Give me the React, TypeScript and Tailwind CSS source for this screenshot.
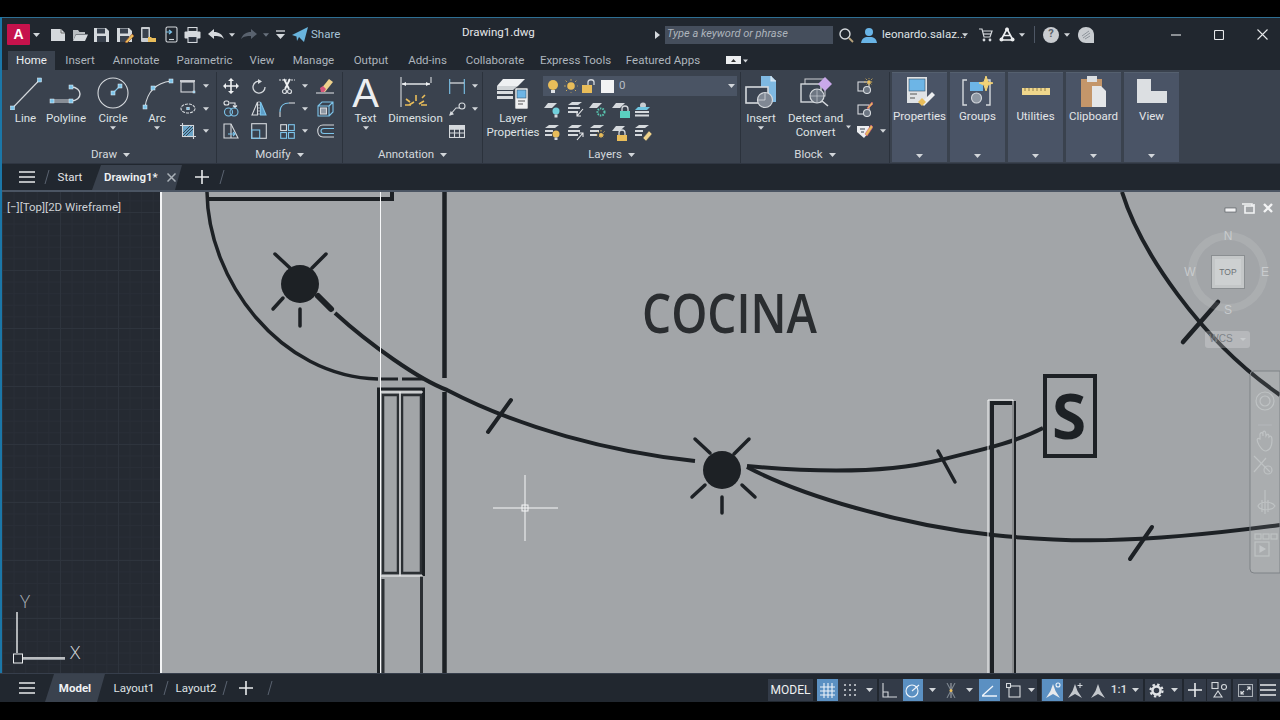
import React from "react";

type P = { className?: string };
const L = "#d5d9dd";
const B = "#7cc4ea";
const Y = "#e9bd5a";

const Caret = ({ className = "", c = "#d2d6da", w = 7 }: P & { c?: string; w?: number }) => (
  <svg width={w} height={4} viewBox="0 0 7 4" className={"shrink-0 " + className}>
    <path d="M0 0H7L3.5 4Z" fill={c} />
  </svg>
);
const Box = ({ x, y, s = 4, c = B }: { x: number; y: number; s?: number; c?: string }) => (
  <rect x={x - s / 2} y={y - s / 2} width={s} height={s} fill={c} stroke="#e8f4fb" strokeWidth={0.5} />
);
const Ic = ({ w = 18, h = 18, className = "", children }: P & { w?: number; h?: number; children: React.ReactNode }) => (
  <svg width={w} height={h} viewBox={`0 0 ${w} ${h}`} fill="none" stroke={L} strokeWidth={1.1} className={"shrink-0 " + className}>
    {children}
  </svg>
);
const Ham = ({ className = "" }: P) => (
  <Ic w={16} h={14} className={className}>
    <path d="M0 2H16M0 7H16M0 12H16" strokeWidth={1.6} stroke="#e8eaec" />
  </Ic>
);
const Plus = ({ className = "" }: P) => (
  <Ic w={14} h={14} className={className}>
    <path d="M7 0V14M0 7H14" strokeWidth={1.6} stroke="#e8eaec" />
  </Ic>
);
const Slash = ({ className = "" }: P) => (
  <Ic w={6} h={14} className={className}>
    <path d="M1 14L5 0" stroke="#5a6370" strokeWidth={1} />
  </Ic>
);

/* ---------- quick access ---------- */
const QNew = () => (
  <Ic w={16} h={14} className="ml-[10px]">
    <path d="M1 1H11L15 5V13H1Z" fill={L} stroke="none" />
    <path d="M11 1V5H15" stroke="#555" strokeWidth={0.8} />
  </Ic>
);
const QOpen = () => (
  <Ic w={16} h={14} className="ml-[6px]">
    <path d="M1 2H6L7.500 4H13V6H4L1 13Z" fill="#b9bdc1" stroke="none" />
    <path d="M4 6.500H16L13 13H1Z" fill={L} stroke="none" />
  </Ic>
);
const QSave = ({ pen, className = "" }: P & { pen?: boolean }) => (
  <Ic w={18} h={16} className={className}>
    <path d="M1 1H13L16 4V15H1Z" fill={L} stroke="none" />
    <rect x={4} y={1.500} width={8} height={5} fill="#39414d" stroke="none" />
    <rect x={4} y={9} width={9} height={6} fill="#39414d" stroke="none" />
    {pen && <path d="M9 15L16 7L18 9L11 16Z" fill={Y} stroke="#a5522c" strokeWidth={0.6} />}
  </Ic>
);
const QWeb = () => (
  <Ic w={16} h={17} className="ml-[6px]">
    <rect x={1} y={1} width={9} height={15} rx={1} fill="#c8ccd0" stroke="none" />
    <rect x={2.500} y={3} width={6} height={9} fill="#39414d" stroke="none" />
    <path d="M8 11H11L12 12H16V16H8Z" fill={Y} stroke="none" />
  </Ic>
);
const QPhone = () => (
  <Ic w={13} h={17} className="ml-[9px]">
    <rect x={1} y={1} width={11} height={15} rx={1.500} stroke={L} />
    <path d="M1 6H6M4 4L6.500 6L4 8" stroke={B} strokeWidth={1.2} />
    <path d="M4 13.500H9" stroke={L} />
  </Ic>
);
const QPrint = () => (
  <Ic w={17} h={16} className="ml-[6px]">
    <rect x={4} y={0.500} width={9} height={4} stroke={L} />
    <rect x={0.500} y={4.500} width={16} height={7} rx={1} fill={L} stroke="none" />
    <rect x={4} y={9.500} width={9} height={6} fill="#2b323d" stroke={L} />
  </Ic>
);
const QUndo = ({ dim, className = "" }: P & { dim?: boolean }) => (
  <Ic w={16} h={11} className={className}>
    <path d="M0 5L6 0V3C11 3 14 5 16 10C13 7 10 7 6 7V10Z" fill={dim ? "#59626e" : L} stroke="none" transform={dim ? "matrix(-1 0 0 1 16 0)" : undefined} />
  </Ic>
);

const TitleBar = () => (
  <div className="h-[34px] flex items-center bg-[#21272f] border-t border-[#2e6f93] shrink-0">
    <div className="w-[460px] flex items-center shrink-0">
      <div className="ml-[5px] w-[23px] h-[21px] bg-[#c6124c] rounded-[1px] flex items-center justify-center text-white font-bold text-[14px] font-['Liberation_Sans',sans-serif]">A</div>
      <Caret className="ml-[3px]" />
      <QNew />
      <QOpen />
      <QSave className="ml-[5px]" />
      <QSave pen className="ml-[5px]" />
      <QWeb />
      <QPhone />
      <QPrint />
      <QUndo className="ml-[7px]" />
      <Caret w={6} className="ml-[5px]" />
      <QUndo dim className="ml-[6px]" />
      <Caret w={6} c="#69727e" className="ml-[6px]" />
      <Ic w={9} h={9} className="ml-[7px]">
        <path d="M0 1H9" strokeWidth={1.3} />
        <path d="M0 4H9L4.500 9Z" fill={L} stroke="none" />
      </Ic>
      <Ic w={16} h={15} className="ml-[7px]">
        <path d="M0 8L16 0L12 15L7 10L5 14L4.500 9.500Z" fill="#69b4dd" stroke="none" />
      </Ic>
      <span className="ml-[3px] text-[#a6c3d8]">Share</span>
    </div>
    <div className="w-[72px] text-center text-[#e6e8ea] pb-[3px] shrink-0 whitespace-nowrap">Drawing1.dwg</div>
    <Ic w={5} h={8} className="ml-[121px]"><path d="M0 0L5 4L0 8Z" fill={L} stroke="none" /></Ic>
    <div className="ml-[5px] w-[168px] h-[18px] bg-[#454e5c] flex items-center pl-[2px] italic text-[11px] text-[#aeb5bc] whitespace-nowrap">Type a keyword or phrase</div>
    <Ic w={16} h={16} className="ml-[5px]">
      <circle cx={7} cy={7} r={5} strokeWidth={1.4} />
      <path d="M11 11L15 15" strokeWidth={1.8} stroke="#b9a37c" />
    </Ic>
    <Ic w={16} h={16} className="ml-[7px]">
      <circle cx={8} cy={5} r={4} fill="#69b4e6" stroke="none" />
      <path d="M0 16C1 10 5 10 8 10C11 10 15 10 16 16Z" fill="#69b4e6" stroke="none" />
    </Ic>
    <span className="ml-[5px] w-[78px] text-[#dfe2e5] whitespace-nowrap">leonardo.salaz...</span>
    <Caret w={6} className="ml-[2px]" />
    <Ic w={15} h={15} className="ml-[10px]">
      <path d="M1 2H4L6 10H12L14 4H5" strokeWidth={1.2} />
      <path d="M5 7H13" strokeWidth={1.2} />
      <circle cx={6} cy={13} r={1.400} fill={L} stroke="none" />
      <circle cx={12} cy={13} r={1.400} fill={L} stroke="none" />
    </Ic>
    <Ic w={16} h={15} className="ml-[6px]">
      <path d="M8 2L2 13H14Z M5 8.500H11" stroke="#eceef0" strokeWidth={1.6} />
      <circle cx={8} cy={2.500} r={2} fill="#eceef0" stroke="none" />
      <circle cx={2.500} cy={12.500} r={2} fill="#eceef0" stroke="none" />
      <circle cx={13.500} cy={12.500} r={2} fill="#eceef0" stroke="none" />
    </Ic>
    <Caret w={6} className="ml-[4px]" />
    <div className="ml-[9px] w-px h-[17px] bg-[#4e5765]" />
    <div className="ml-[8px] w-[16px] h-[16px] rounded-full bg-[#c9ccd0] flex items-center justify-center text-[11px] font-bold text-[#5a6068]">?</div>
    <Caret w={6} className="ml-[5px]" />
    <Ic w={16} h={16} className="ml-[8px]">
      <path d="M8 0C12.500 0 16 3 16 8V16H8C3.500 16 0 12.500 0 8C0 3 3.500 0 8 0Z" fill="#c8ccd0" stroke="none" />
      <path d="M4 9L11 4M5 11L12 6M7 12L12 9" stroke="#7e858d" strokeWidth={0.8} />
    </Ic>
    <div className="ml-auto flex items-center">
      <div className="w-[43px] flex justify-center"><Ic w={10} h={4}><path d="M0 2H10" stroke="#e6e8ea" /></Ic></div>
      <div className="w-[43px] flex justify-center"><Ic w={10} h={10}><rect x={0.500} y={0.500} width={9} height={9} rx={1} stroke="#e6e8ea" /></Ic></div>
      <div className="w-[36px] ml-[4px] flex justify-center"><Ic w={11} h={11}><path d="M0.500 0.500L10.500 10.500M10.500 0.500L0.500 10.500" stroke="#e6e8ea" /></Ic></div>
    </div>
  </div>
);

const tabs: [string, string][] = [
  ["Insert", "w-[50px]"],
  ["Annotate", "w-[62px]"],
  ["Parametric", "w-[75px]"],
  ["View", "w-[40px]"],
  ["Manage", "w-[63px]"],
  ["Output", "w-[52px]"],
  ["Add-ins", "w-[61px]"],
  ["Collaborate", "w-[74px]"],
  ["Express Tools", "w-[87px]"],
  ["Featured Apps", "w-[88px]"],
];
const TabRow = () => (
  <div className="h-[19px] flex items-stretch bg-[#21272f] shrink-0">
    <div className="ml-[6px] w-[47px] bg-[#3a424e] text-[#eef0f2] flex items-center justify-center">Home</div>
    {tabs.map(([t, w]) => (
      <div key={t} className={w + " flex items-center justify-center text-[#adb5bd] whitespace-nowrap"}>{t}</div>
    ))}
    <div className="ml-[19px] flex items-center">
      <Ic w={15} h={9}><rect width={15} height={8} fill="#eceef0" stroke="none" /><path d="M5 6H10L7.500 3Z" fill="#333" stroke="none" /></Ic>
      <Caret w={5} className="ml-[2px]" />
    </div>
  </div>
);

/* ---------- ribbon ---------- */
const Panel = ({ w, label, children }: { w: string; label: string; children: React.ReactNode }) => (
  <div className={w + " shrink-0 h-[91px] mt-[2px] flex flex-col border-r border-[#2b323c]"}>
    <div className="h-[74px] flex items-start pt-[3px]">{children}</div>
    <div className="h-[17px] flex items-center justify-center text-[#d5d9dd] gap-[6px]">
      <span>{label}</span>
      <Caret />
    </div>
  </div>
);
const Big = ({ w, label, caret, children }: { w: string; label: React.ReactNode; caret?: boolean; children: React.ReactNode }) => (
  <div className={w + " shrink-0 flex flex-col items-center text-[#dfe2e5] leading-[14px] text-center"}>
    <div className="h-[35px] flex items-center justify-center">{children}</div>
    <div className="mt-px">{label}</div>
    {caret && <Caret w={6} className="mt-[1px]" />}
  </div>
);
const Cell = ({ w, caret, children }: { w: string; caret?: boolean; children: React.ReactNode }) => (
  <div className={w + " h-[22.5px] flex items-center"}>
    <div className="w-[28px] flex justify-center">{children}</div>
    {caret && <Caret w={6} className="ml-[1px]" />}
  </div>
);

const LineI = () => (
  <Ic w={34} h={34}>
    <path d="M3.500 32L30.500 4" />
    <Box x={3.500} y={32} /><Box x={30.500} y={4} />
  </Ic>
);
const PolyI = () => (
  <Ic w={40} h={34}>
    <path d="M6 24H25M6 26H25" />
    <path d="M25 25C37 25 37 11 25 11" strokeWidth={1.4} />
    <Box x={6} y={25} /><Box x={25} y={25} /><Box x={25} y={11} />
  </Ic>
);
const CircleI = () => (
  <Ic w={34} h={34}>
    <circle cx={17} cy={17} r={15} />
    <path d="M17 17L24 10" stroke={B} />
    <Box x={17} y={17} /><Box x={24} y={10} />
  </Ic>
);
const ArcI = () => (
  <Ic w={34} h={34}>
    <path d="M5 31C7 17 15 7 31 5" />
    <Box x={5} y={31} /><Box x={13} y={12} /><Box x={31} y={5} />
  </Ic>
);
const RectI = () => (
  <Ic w={16} h={15}>
    <rect x={1} y={3} width={13} height={10} />
    <path d="M0 2H15" strokeWidth={1.8} />
    <Box x={14} y={13} s={2} />
  </Ic>
);
const EllI = () => (
  <Ic w={16} h={13}>
    <ellipse cx={8} cy={6.500} rx={7} ry={4.500} strokeDasharray="3 1" />
    <Box x={8} y={6.500} s={2.500} />
  </Ic>
);
const HatchI = () => (
  <Ic w={16} h={16}>
    <rect x={2.500} y={2.500} width={11} height={11} fill="#6aa4c8" stroke={L} />
    <path d="M3 10L10 3M3 13L13 3M6 13L13 6" stroke="#28303a" strokeWidth={0.8} />
    <path d="M0 2.500H2M2.500 0V2M14 13.500H16M13.500 14V16" />
  </Ic>
);
const Move = () => (
  <Ic w={16} h={16}>
    <path d="M8 1V15M1 8H15" stroke="#eef0f2" strokeWidth={1.6} />
    <path d="M8 0L11 3H5ZM8 16L5 13H11ZM0 8L3 5V11ZM16 8L13 11V5Z" fill="#eef0f2" stroke="none" />
  </Ic>
);
const Rot = () => (
  <Ic w={16} h={16}>
    <path d="M10 3.500A6 6 0 1 0 14 9" strokeWidth={1.3} />
    <path d="M7 1L11 3.500L7 6Z" fill={L} stroke="none" />
  </Ic>
);
const Trim = () => (
  <Ic w={16} h={17}>
    <path d="M0 2H16" strokeDasharray="2 1" />
    <path d="M5 1L10 11M11 1L6 11" stroke="#eef0f2" strokeWidth={1.8} />
    <circle cx={5.500} cy={13.500} r={2} strokeWidth={1.2} />
    <circle cx={10.500} cy={13.500} r={2} strokeWidth={1.2} />
  </Ic>
);
const Erase = () => (
  <Ic w={18} h={16}>
    <path d="M5 11L13 1L17 4L9 14H6Z" fill="#eed28c" stroke="none" />
    <path d="M4 10L7 8L10 11L8 14H5Z" fill="#d6577c" stroke="none" />
    <path d="M0 15H18" stroke="#d5d9dd" />
  </Ic>
);
const Copy = () => (
  <Ic w={17} h={17}>
    <rect x={1} y={1} width={5} height={4} rx={2} stroke="#e8eaec" />
    <path d="M7 3H12V7M10 5.500L12 7.500L14 5.500" stroke="#e8eaec" />
    <circle cx={5.500} cy={12} r={4} stroke={B} />
    <circle cx={11} cy={12} r={4} stroke={B} />
  </Ic>
);
const Mirror = () => (
  <Ic w={16} h={15}>
    <path d="M6.500 1V14H1Z" />
    <path d="M9.500 1V14H15Z" fill="#5d9ec8" stroke={B} />
    <path d="M8 0V15" strokeWidth={0.7} strokeDasharray="2 1" />
  </Ic>
);
const Fillet = () => (
  <Ic w={16} h={16}>
    <path d="M1 16V11" stroke={L} />
    <path d="M1 11C1 5 5 2 10 2" stroke={B} strokeWidth={1.2} />
    <path d="M10 2H16" stroke={L} />
  </Ic>
);
const Cube = () => (
  <Ic w={17} h={16}>
    <path d="M1 5H12V15H1ZM1 5L5 1H16V11L12 15M12 5L16 1" stroke={B} />
    <rect x={3.500} y={7} width={6} height={6} fill="#8f98a3" stroke={L} />
  </Ic>
);
const Stretch = () => (
  <Ic w={16} h={17}>
    <path d="M1 1H8L15 15H1Z" />
    <path d="M8 1V15" />
    <path d="M5 11H12M10 9L12 11L10 13" stroke={B} />
  </Ic>
);
const Scale = () => (
  <Ic w={16} h={16}>
    <rect x={0.700} y={0.700} width={14.600} height={14.600} />
    <rect x={0.700} y={7} width={8} height={8.300} stroke={B} />
  </Ic>
);
const ArrayI = () => (
  <Ic w={15} h={15}>
    {[[0.700, 0.700], [8.500, 0.700], [0.700, 8.500], [8.500, 8.500]].map(([x, y], i) => (
      <rect key={i} x={x} y={y} width={5.800} height={5.800} stroke={i < 1 ? L : B} />
    ))}
  </Ic>
);
const Offset = () => (
  <Ic w={17} h={14}>
    <path d="M17 1H6C-1 1 -1 13 6 13H17" stroke={L} />
    <path d="M17 4.500H7C3 4.500 3 9.500 7 9.500H17" stroke={B} />
  </Ic>
);
const DimI = () => (
  <Ic w={34} h={32}>
    <path d="M2 0V30" stroke={L} />
    <path d="M32 0V6" stroke={L} />
    <path d="M3 7H31" stroke="#eef0f2" strokeWidth={1.4} />
    <path d="M3 7L7 5V9ZM31 7L27 5V9Z" fill="#eef0f2" stroke="none" />
    <path d="M10 28L15 25M17 24V18M20 27L25 24M7 22L11 25M26 18L23 21M28 28H22M12 28H6" stroke={Y} strokeWidth={1.6} />
  </Ic>
);
const DimSmall = () => (
  <Ic w={16} h={15}>
    <path d="M0.700 0V15M15.300 0V15" stroke={B} />
    <path d="M1 4H15" stroke={L} strokeWidth={1.3} />
  </Ic>
);
const Leader = () => (
  <Ic w={17} h={14}>
    <path d="M1 13L7 6H10" />
    <path d="M1 13L4 12L2 10Z" fill={L} />
    <circle cx={13} cy={4} r={3} />
  </Ic>
);
const TableI = () => (
  <Ic w={16} h={13}>
    <rect x={0.500} y={0.500} width={15} height={12} />
    <path d="M0 4H16M0 8H16M5.500 4V13M10.500 4V13" />
    <rect x={0.500} y={0.500} width={15} height={3.500} fill={L} />
  </Ic>
);
const LayerProps = () => (
  <Ic w={34} h={34}>
    <path d="M1 10H22L17 14H1Z" fill="#cfd3d6" stroke="none" />
    <path d="M1 15H17V18H1ZM1 20H17V23H1Z" fill="#d9dcdf" stroke="none" />
    <path d="M7 3H29L22 10H1Z" fill="#eef0f2" stroke="none" />
    <rect x={19} y={12} width={13} height={21} rx={1} fill="#f0f1f2" stroke="#4a4f55" strokeWidth={0.6} />
    <rect x={21} y={14} width={9} height={8} fill="#6db5e6" stroke="#3a5a72" strokeWidth={0.6} />
    <path d="M22 25H29M22 28H27" stroke="#555" />
  </Ic>
);
const Bulb = ({ c = Y }: { c?: string }) => (
  <>
    <circle cx={7} cy={6} r={5} fill={c} stroke="none" />
    <rect x={5} y={11} width={4} height={3} fill="#dfe2e5" stroke="none" />
  </>
);
const Sun = ({ cx = 7, cy = 7, r = 3.500 }: { cx?: number; cy?: number; r?: number }) => (
  <>
    <circle cx={cx} cy={cy} r={r} fill={Y} stroke="none" />
    <path d={`M${cx} ${cy - r - 3}V${cy + r + 3}M${cx - r - 3} ${cy}H${cx + r + 3}M${cx - r - 1.500} ${cy - r - 1.500}L${cx + r + 1.500} ${cy + r + 1.500}M${cx + r + 1.500} ${cy - r - 1.500}L${cx - r - 1.500} ${cy + r + 1.500}`} stroke={Y} strokeWidth={0.9} strokeDasharray="1.500 5" />
  </>
);
const Lock = ({ x = 1, y = 7, c = Y, open }: { x?: number; y?: number; c?: string; open?: boolean }) => (
  <>
    <rect x={x} y={y} width={10} height={8} fill={c} stroke="none" />
    <path d={open ? `M${x + 6} ${y}V${y - 3}C${x + 6} ${y - 6} ${x + 12} ${y - 6} ${x + 12} ${y - 3}V${y}` : `M${x + 2} ${y}V${y - 2}C${x + 2} ${y - 6} ${x + 8} ${y - 6} ${x + 8} ${y - 2}V${y}`} stroke={L} strokeWidth={1.3} fill="none" />
  </>
);
const LayerRow = ({ k }: { k: number }) => {
  const body = [
    <><path d="M4 1H13L8 6H0Z" fill={L} stroke="none" /><circle cx={12} cy={9} r={3.500} fill="#71d0dc" stroke="none" /><rect x={10.500} y={12.500} width={3} height={3} fill={L} stroke="none" /></>,
    <><path d="M5 0H15L11 3H1ZM1 5H13V7H1ZM1 9H11V11H1Z" fill={L} stroke="none" /><path d="M16 7L10 14M10 10V14H14" stroke="#e8eaec" /></>,
    <><path d="M4 1H13L8 6H0Z" fill={L} stroke="none" /><circle cx={12} cy={10} r={3.500} fill="none" stroke="#58c6b0" strokeWidth={2} strokeDasharray="1.500 1" /></>,
    <><path d="M4 1H13L8 6H0Z" fill={L} stroke="none" /><Lock x={8} y={9} c="#5ad0c0" /></>,
    <><circle cx={9} cy={3.500} r={3} fill="#c8ccd0" stroke="none" /><path d="M4 5H16L13 8H1Z" fill="#6fc5e0" stroke="none" /><path d="M1 9H15V11H1ZM1 12.500H15V14.500H1Z" fill={L} stroke="none" /></>,
    <><path d="M5 0H15L11 3H1ZM1 5H9V7H1ZM1 9H8V11H1Z" fill={L} stroke="none" /><circle cx={12} cy={9} r={3.500} fill={Y} stroke="none" /><rect x={10.500} y={12.500} width={3} height={2.500} fill={L} stroke="none" /></>,
    <><path d="M5 0H15L11 3H1ZM1 5H13V7H1ZM1 9H11V11H1Z" fill={L} stroke="none" /><path d="M10 15L16 8M12 8H16V12" stroke="#e8eaec" /></>,
    <><path d="M5 0H15L11 3H1ZM1 5H10V7H1ZM1 9H8V11H1Z" fill={L} stroke="none" /><Sun cx={12} cy={10} r={2} /></>,
    <><path d="M4 1H13L8 6H0Z" fill={L} stroke="none" /><Lock x={5} y={10} /></>,
    <><path d="M5 0H15L11 3H1ZM1 5H9V7H1ZM1 9H8V11H1Z" fill={L} stroke="none" /><path d="M9 13L15 6L18 9L12 16Z" fill="#eed28c" stroke="#555" strokeWidth={0.5} /></>,
  ];
  return <Ic w={18} h={16} className="w-[18px]">{body[k]}</Ic>;
};
const InsertI = () => (
  <Ic w={32} h={34}>
    <path d="M16 0H26L31 5V26H16Z" fill="#7fb9e2" stroke="none" />
    <path d="M26 0V5H31" stroke="#dbeaf5" fill="#c8def0" />
    <rect x={1} y={11} width={22} height={16} fill="#3b4452" stroke={L} strokeWidth={1.6} />
    <circle cx={20} cy={24} r={7.500} fill="#808894" stroke={L} strokeWidth={1.2} />
    <path d="M20 24V17M20 24H13" stroke={L} strokeWidth={0.8} />
  </Ic>
);
const DetectI = () => (
  <Ic w={34} h={34}>
    <rect x={6} y={3} width={20} height={17} stroke="#c0c4c8" />
    <rect x={2} y={8} width={20} height={18} fill="#3b4452" stroke={L} strokeWidth={1.4} />
    <circle cx={18} cy={20} r={7} fill="#6d7682" stroke={L} strokeWidth={1.2} />
    <path d="M23 25L29 30" strokeWidth={1.6} />
    <path d="M18 13V27M11 20H25" stroke={L} strokeWidth={0.6} />
    <path d="M26 1L33 8L26 15L19 8Z" fill="#c9a8ea" stroke="none" />
  </Ic>
);
const BlockI = ({ k }: { k: number }) => (
  <Ic w={16} h={16}>
    {k < 2 && (
      <>
        <rect x={1} y={4} width={11} height={9} />
        <circle cx={10} cy={12} r={3.500} fill="#6d7682" />
      </>
    )}
    {k === 0 && <Sun cx={12} cy={4} r={1.800} />}
    {k === 1 && <path d="M10 7L15 1L16 3L11 8Z" fill={Y} stroke="#d6577c" strokeWidth={0.6} />}
    {k === 2 && (
      <>
        <path d="M0 3H12V9L7 15L0 9Z" fill="#eceef0" stroke="none" />
        <path d="M3 6H8M4 9H7" stroke="#39414d" />
        <path d="M8 11L14 2L16 4L10 13Z" fill={Y} stroke="#d6577c" strokeWidth={0.6} />
      </>
    )}
  </Ic>
);

const Collapsed = ({ label, children }: { label: string; children: React.ReactNode }) => (
  <div className="w-[55px] h-[90px] mt-[2px] mr-[3px] bg-[#4a5466] flex flex-col items-center shrink-0 text-[#e3e5e8] border-t border-[#55606f]">
    <div className="h-[35px] flex items-center justify-center">{children}</div>
    <div className="mt-[1px] leading-[14px] whitespace-nowrap">{label}</div>
    <Caret className="mt-auto mb-[4px]" />
  </div>
);

const Ribbon = () => (
  <div className="h-[94px] flex items-start pl-[3px] bg-[#3a424e] shrink-0 border-b border-[#2f3642]">
    <Panel w="w-[212px]" label="Draw">
      <Big w="w-[41px]" label="Line"><LineI /></Big>
      <Big w="w-[40px]" label="Polyline"><PolyI /></Big>
      <Big w="w-[54px]" label="Circle" caret><CircleI /></Big>
      <Big w="w-[34px]" label="Arc" caret><ArcI /></Big>
      <div className="flex flex-col">
        <Cell w="w-[42px]" caret><RectI /></Cell>
        <Cell w="w-[42px]" caret><EllI /></Cell>
        <Cell w="w-[42px]" caret><HatchI /></Cell>
      </div>
    </Panel>
    <Panel w="w-[126px]" label="Modify">
      <div className="grid grid-cols-[28px_28px_38px_28px]">
        <Cell w="w-[28px]"><Move /></Cell>
        <Cell w="w-[28px]"><Rot /></Cell>
        <Cell w="w-[38px]" caret><Trim /></Cell>
        <Cell w="w-[28px]"><Erase /></Cell>
        <Cell w="w-[28px]"><Copy /></Cell>
        <Cell w="w-[28px]"><Mirror /></Cell>
        <Cell w="w-[38px]" caret><Fillet /></Cell>
        <Cell w="w-[28px]"><Cube /></Cell>
        <Cell w="w-[28px]"><Stretch /></Cell>
        <Cell w="w-[28px]"><Scale /></Cell>
        <Cell w="w-[38px]" caret><ArrayI /></Cell>
        <Cell w="w-[28px]"><Offset /></Cell>
      </div>
    </Panel>
    <Panel w="w-[140px]" label="Annotation">
      <Big w="w-[45px]" label="Text" caret>
        <span className="block h-[30px] text-[40px] leading-[30px] text-[#eceef0] font-['Liberation_Sans',sans-serif]">A</span>
      </Big>
      <Big w="w-[55px]" label="Dimension"><DimI /></Big>
      <div className="flex flex-col">
        <Cell w="w-[39px]" caret><DimSmall /></Cell>
        <Cell w="w-[39px]" caret><Leader /></Cell>
        <Cell w="w-[39px]"><TableI /></Cell>
      </div>
    </Panel>
    <Panel w="w-[258px]" label="Layers">
      <Big w="w-[60px]" label={<>Layer<br />Properties</>}><LayerProps /></Big>
      <div className="w-[194px] flex flex-col">
        <div className="h-[20px] mt-[1px] bg-[#4a5464] flex items-center pl-[3px]">
          <Ic w={14} h={15}><Bulb /></Ic>
          <Ic w={16} h={16} className="ml-[3px]"><Sun cx={8} cy={8} r={3.800} /></Ic>
          <Ic w={14} h={16} className="ml-[2px]"><Lock x={1} y={7} open /></Ic>
          <div className="ml-[6px] w-[13px] h-[13px] bg-[#f2f3f4]" />
          <span className="ml-[5px] text-[#b8bec4]">0</span>
          <Caret className="ml-auto mr-[2px]" />
        </div>
        <div className="mt-[2px] flex flex-col">
          {[0, 5].map((o) => (
            <div key={o} className="h-[23px] flex items-center pl-[1px] gap-[4.500px]">
              {[0, 1, 2, 3, 4].map((i) => <LayerRow key={i} k={o + i} />)}
            </div>
          ))}
        </div>
      </div>
    </Panel>
    <Panel w="w-[149px]" label="Block">
      <Big w="w-[40px]" label="Insert" caret><InsertI /></Big>
      <div className="w-[5px]" />
      <Big w="w-[60px]" label={<>Detect and<br />Convert</>}><DetectI /></Big>
      <div className="w-[8px] h-[60px] flex items-end pb-[6px]"><Caret w={5} /></div>
      <div className="flex flex-col -ml-[2px]">
        <Cell w="w-[38px]"><BlockI k={0} /></Cell>
        <Cell w="w-[38px]"><BlockI k={1} /></Cell>
        <Cell w="w-[38px]" caret><BlockI k={2} /></Cell>
      </div>
    </Panel>
    <div className="w-[2px]" />
    <Collapsed label="Properties">
      <Ic w={30} h={30}>
        <rect x={2} y={1} width={20} height={26} fill="#dfe2e5" stroke="none" />
        <rect x={4} y={3} width={16} height={12} fill="#6db5e6" stroke="#38536a" strokeWidth={0.6} />
        <path d="M5 18H12M5 22H10" stroke="#555" />
        <path d="M16 27L27 16L30 19L19 30Z" fill="#eceef0" stroke="none" />
        <path d="M13 26L17 22L21 26L17 30Z" fill={Y} stroke="none" />
      </Ic>
    </Collapsed>
    <Collapsed label="Groups">
      <Ic w={32} h={30}>
        <path d="M5 4H1V29H5M24 4H28V29H24" stroke={L} strokeWidth={1.4} />
        <rect x={8} y={6} width={13} height={9} fill="#6db5e6" stroke="none" />
        <circle cx={14.500} cy={22} r={5} fill="#8f98a3" stroke={L} />
        <path d="M24 0L26 6L31 7L26 9L24 15L22 9L17 7L22 6Z" fill="#f3d276" stroke="#f3d276" strokeWidth={1} />
      </Ic>
    </Collapsed>
    <Collapsed label="Utilities">
      <Ic w={28} h={30}>
        <rect x={0} y={12} width={28} height={7} fill="#f0d78c" stroke="none" />
        <path d="M3 12V15M7 12V15M11 12V15M15 12V15M19 12V15M23 12V15" stroke="#7c6a38" strokeWidth={0.8} />
      </Ic>
    </Collapsed>
    <Collapsed label="Clipboard">
      <Ic w={26} h={32}>
        <rect x={0} y={4} width={21} height={28} fill="#c4966a" stroke="none" />
        <rect x={6} y={1} width={10} height={6} fill="#dcdfe2" stroke="none" />
        <path d="M11 11H20L25 16V32H11Z" fill="#e4e6e8" stroke="none" />
      </Ic>
    </Collapsed>
    <Collapsed label="View">
      <Ic w={32} h={26}>
        <path d="M1 1H15V13H31V25H1Z" fill="#dcdfe2" stroke="none" />
      </Ic>
    </Collapsed>
  </div>
);

const DocTabs = () => (
  <div className="h-[28px] flex items-center bg-[#21272f] shrink-0 border-b-2 border-[#4b5563]">
    <Ham className="ml-[17px]" />
    <Slash className="ml-[9px]" />
    <div className="w-[36px] ml-[2px] text-center text-[#e3e5e8] pt-px">Start</div>
    <div className="ml-[4px] w-[90px] h-[25px] self-end bg-[#3a424e] [clip-path:polygon(9px_0,100%_0,calc(100%-7px)_100%,0_100%)] flex items-center pl-[12px] pr-[6px] text-[#f0f2f4] font-semibold whitespace-nowrap">
      <span>Drawing1*</span>
      <Ic w={9} h={9} className="ml-auto"><path d="M0.500 0.500L8.500 8.500M8.500 0.500L0.500 8.500" stroke="#aab1b8" strokeWidth={1.5} /></Ic>
    </div>
    <Plus className="ml-[13px]" />
    <Slash className="ml-[10px]" />
  </div>
);

/* ---------- canvas ---------- */
const K = "#1d2125";
const Sunburst = ({ cx, cy, rays, fat }: { cx: number; cy: number; rays: number[][]; fat?: number }) => (
  <g stroke={K} strokeWidth={4} strokeLinecap="round">
    <circle cx={cx} cy={cy} r={19} fill={K} stroke="none" />
    {rays.map((r, i) => (
      <line key={i} x1={r[0]} y1={r[1]} x2={r[2]} y2={r[3]} strokeWidth={i === fat ? 6 : 3.500} />
    ))}
  </g>
);
const Drawing = () => (
  <svg viewBox="160 192 1120 481" width={1120} height={481} className="block absolute inset-0 font-['Open_Sans',sans-serif]" fill="none">
    <line x1={161} y1={192} x2={161} y2={673} stroke="#f4f5f6" strokeWidth={2} />
    <g stroke={K} strokeLinecap="butt">
      <path d="M207 192C208 280 280 377 378 379" strokeWidth={3.500} />
      <path d="M380 379H398M402 379H423" strokeWidth={3} />
      <path d="M207 199H392V192" strokeWidth={4} />
      <path d="M444.500 192V378M444.500 392V673" strokeWidth={4.500} />
      <path d="M335 313C370 345 420 380 447 390C520 428 610 452 695 461" strokeWidth={4} />
      <path d="M488 432L511 400" strokeWidth={4} strokeLinecap="round" />
      <path d="M747 466C800 471 880 475 940 460C970 452 1010 445 1043 428" strokeWidth={4} />
      <path d="M747 467C800 495 900 525 993 535C1060 542 1130 545 1280 525" strokeWidth={4} />
      <path d="M938 451L955 482" strokeWidth={3.500} strokeLinecap="round" />
      <path d="M1130 559L1152 527" strokeWidth={4} strokeLinecap="round" />
      <rect x={1045} y={376} width={50} height={80} strokeWidth={4} />
      <path d="M1122 192C1140 250 1200 340 1280 395" strokeWidth={4} />
      <path d="M1218 302L1183 342" strokeWidth={4.500} strokeLinecap="round" />
      <path d="M992 673V403H1014V673" strokeWidth={4} />
      <path d="M378.500 673V389H423.500V576" strokeWidth={3} />
      <path d="M383 395V573H398V395ZM402 395V573H421V395Z" strokeWidth={2.500} stroke="#2b2f33" />
      <path d="M383 579V673M421.500 576V673" strokeWidth={3} stroke="#2b2f33" />
    </g>
    <Sunburst cx={300} cy={284} fat={4} rays={[[275, 254, 290, 268], [326, 254, 312, 268], [283, 298, 273, 309], [300, 309, 300, 326], [318, 296, 331, 309]]} />
    <Sunburst cx={722} cy={470} rays={[[695, 439, 710, 453], [749, 439, 734, 454], [705, 485, 692, 497], [722, 497, 722, 513], [742, 485, 755, 497]]} />
    <text x={642} y={332.500} fontSize={54} fontWeight={600} fill="#2a2d30" textLength={175} lengthAdjust="spacingAndGlyphs" stroke="none">COCINA</text>
    <text x={1069} y={439} fontSize={62} fontWeight={700} fill={K} textAnchor="middle" stroke="none">S</text>
    <g stroke="#f6f7f8" strokeWidth={1}>
      <path d="M380.500 192V392H423M400 392V576M380.500 392V673M380.500 576H423" />
      <path d="M988 673V400H1013V673" />
      <path d="M493 508H558M525 475V541" strokeWidth={1} />
      <rect x={522} y={505} width={6} height={6} strokeWidth={1} />
    </g>
    {/* view cube */}
    <circle cx={1228} cy={272} r={36} stroke="#ffffff" strokeOpacity={0.1} strokeWidth={8} />
    <g fill="#cfd2d4" fillOpacity={0.85} fontSize={12} textAnchor="middle" stroke="none" fontFamily="Liberation Sans, sans-serif">
      <text x={1228} y={240}>N</text>
      <text x={1228} y={314}>S</text>
      <text x={1190} y={276}>W</text>
      <text x={1265} y={276}>E</text>
    </g>
    <rect x={1211.500} y={255.500} width={33} height={33} fill="#c4c7c8" stroke="#8a8e91" />
    <rect x={1215} y={259} width={26} height={26} fill="#cdd0d1" />
    <text x={1228} y={275} fontSize={8.500} fill="#6c7175" textAnchor="middle" fontFamily="Liberation Sans, sans-serif">TOP</text>
    <rect x={1205} y={331} width={45} height={17} rx={3} fill="#ffffff" fillOpacity={0.22} />
    <text x={1221} y={342} fontSize={10} fill="#80858a" textAnchor="middle" fontFamily="Liberation Sans, sans-serif">WCS</text>
    <path d="M1240 338H1246L1243 341Z" fill="#c8cbcd" />
    {/* navigation bar */}
    <path d="M1280 371H1254Q1250 371 1250 375V569Q1250 573 1254 573H1280Z" fill="#ffffff" fillOpacity={0.09} stroke="#7f8387" />
    <g stroke="#c2c5c7" strokeOpacity={0.85} strokeWidth={1.200}>
      <circle cx={1265} cy={401} r={9} />
      <circle cx={1265} cy={401} r={5} />
      <path d="M1258 425H1272" strokeOpacity={0.4} />
      <path d="M1259 445C1256 440 1257 437 1260 439V434C1262 431 1263 433 1263 436V432C1265 430 1266 432 1266 436C1268 433 1269 434 1269 437C1271 435 1272 437 1272 440C1272 446 1270 450 1266 451C1262 451 1261 448 1259 445Z" />
      <path d="M1254 456L1270 472M1254 472L1266 458" />
      <circle cx={1268} cy={470} r={4} />
      <path d="M1265 490V514M1258 506C1260 501 1272 501 1275 506C1272 511 1260 511 1258 506ZM1262 500V512M1268 500V512" />
      <rect x={1255} y={534} width={6} height={5} />
      <rect x={1263} y={534} width={6} height={5} />
      <rect x={1271} y={534} width={6} height={5} />
      <rect x={1255} y={542} width={14} height={14} />
      <path d="M1260 546L1265 549L1260 552Z" fill="#c2c5c7" />
    </g>
    {/* viewport controls */}
    <g stroke="#4a4f55" strokeWidth={0.6} fill="#f2f3f4">
      <rect x={1225} y={208} width={11} height={4} />
      <path d="M1245 206H1252V204H1242M1245 206V213H1254V206Z M1254 204V211" stroke="#f2f3f4" strokeWidth={1.6} fill="none" />
      <path d="M1264 204L1272 212M1272 204L1264 212" stroke="#f2f3f4" strokeWidth={2.400} fill="none" />
    </g>
  </svg>
);

const Ucs = () => (
  <svg width={100} height={100} viewBox="0 -18 100 100" className="absolute -left-[2px] bottom-0 font-['Open_Sans',sans-serif]" fill="none">
    <path d="M17 21V62M22 67H65" stroke="#eceef0" strokeWidth={1.400} />
    <path d="M22 68.500H65" stroke="#8f959c" strokeWidth={1} />
    <rect x={13.500} y={63} width={9} height={9} stroke="#eceef0" strokeWidth={1} />
    <text x={25} y={17} fontSize={19} fontWeight={300} textAnchor="middle" fill="#aab0b6">Y</text>
    <text x={75} y={68} fontSize={19} fontWeight={300} textAnchor="middle" fill="#d5d9dd">X</text>
  </svg>
);

const Canvas = () => (
  <div className="h-[481px] flex shrink-0">
    <div className="relative w-[158px] shrink-0 bg-[#252a32] [background-image:linear-gradient(90deg,#2e343d_1px,transparent_1px),linear-gradient(#2e343d_1px,transparent_1px),linear-gradient(90deg,#292e37_1px,transparent_1px),linear-gradient(#292e37_1px,transparent_1px)] [background-size:58px_58px,58px_58px,11.600px_11.600px,11.600px_11.600px] [background-position:0_0,0_20px,0_0,0_20px]">
      <div className="pl-[5px] pt-[7px] text-[#ced2d6] text-[11.500px] leading-[16px]">[−][Top][2D Wireframe]</div>
      <Ucs />
    </div>
    <div className="relative w-[1120px] shrink-0 bg-[#a2a5a8] overflow-hidden">
      <Drawing />
    </div>
  </div>
);

/* ---------- status bar ---------- */
const Active = ({ w, on, children }: { w: string; on?: boolean; children: React.ReactNode }) => (
  <div className={w + " h-[22px] flex items-center justify-center shrink-0 " + (on ? "bg-[#5b90c2]" : "")}>{children}</div>
);
const StCaret = ({ w = "w-[18px]" }: { w?: string }) => (
  <div className={w + " flex items-center justify-center shrink-0"}><Caret /></div>
);
const Group = ({ className = "", children }: P & { children: React.ReactNode }) => (
  <div className={"h-[22px] bg-[#333b48] flex items-center shrink-0 " + className}>{children}</div>
);
const Person = ({ c = "#e8eaec" }: { c?: string }) => (
  <path d="M8 2L10.500 9L15 16L8 12L1 16L5.500 9Z" fill={c} stroke="none" />
);
const StatusBar = () => (
  <div className="h-[29px] flex items-center bg-[#21272f] shrink-0 border-t border-[#363e4b]">
    <Ham className="ml-[19px]" />
    <div className="ml-[10px] w-[60px] h-[28px] bg-[#3a424e] [clip-path:polygon(9px_0,100%_0,calc(100%-8px)_100%,0_100%)] flex items-center justify-center font-bold text-[#f0f2f4] pt-px">Model</div>
    <div className="w-[58px] text-center text-[#dfe2e5] pt-px">Layout1</div>
    <Slash />
    <div className="ml-[1px] w-[52px] text-center text-[#dfe2e5] pt-px">Layout2</div>
    <Slash />
    <Plus className="ml-[11px]" />
    <Slash className="ml-[14px]" />
    <div className="ml-auto flex items-center self-end mb-[1px]">
      <Group className="w-[45px] justify-center text-[#eef0f2]"><span className="text-[12px]">MODEL</span></Group>
      <Group className="ml-[4px] w-[60px]">
        <Active w="w-[21px]" on>
          <Ic w={15} h={15}><path d="M4 0V15M8 0V15M12 0V15M0 4H15M0 8H15M0 12H15" stroke="#eef4fa" strokeWidth={1.100} /></Ic>
        </Active>
        <Active w="w-[24px]">
          <Ic w={13} h={13}>
            {[1, 6, 11].flatMap((x) => [1, 6, 11].map((y) => <circle key={x * 20 + y} cx={x} cy={y} r={1} fill={L} stroke="none" />))}
          </Ic>
        </Active>
        <StCaret w="w-[15px]" />
      </Group>
      <Group className="ml-[2px] w-[158px]">
        <Active w="w-[20px]">
          <Ic w={15} h={15}><path d="M1 0V14H15M1 9H6V14" /></Ic>
        </Active>
        <Active w="ml-[4px] w-[20px]" on>
          <Ic w={16} h={16}>
            <circle cx={7} cy={9} r={6} stroke="#eef4fa" />
            <path d="M7 9L14 3" stroke="#eef4fa" />
          </Ic>
        </Active>
        <StCaret />
        <Active w="w-[20px]">
          <Ic w={14} h={15}><path d="M3 0L11 15M11 0L3 15" stroke="#7d8690" /><path d="M7 0V15" stroke="#a0a6ad" /><circle cx={7} cy={7.500} r={1.500} fill={Y} stroke="none" /></Ic>
        </Active>
        <StCaret w="w-[16px]" />
        <Active w="ml-[2px] w-[21px]" on>
          <Ic w={15} h={13}><path d="M0 12H15M0 12L11 2" stroke="#eef4fa" strokeWidth={1.300} /></Ic>
        </Active>
        <Active w="w-[26px]">
          <Ic w={15} h={15}><rect x={3} y={3} width={11} height={11} /><rect x={0.500} y={0.500} width={4} height={4} fill="#333b48" /></Ic>
        </Active>
        <StCaret w="w-[10px]" />
      </Group>
      <Group className="ml-[4px] w-[102px] pl-[1px]">
        <Active w="w-[21px]" on>
          <Ic w={16} h={16}><Person /><circle cx={13} cy={3} r={2} stroke="#eef4fa" /></Ic>
        </Active>
        <Active w="w-[24px]">
          <Ic w={16} h={16}><Person c="#c4c8cd" /><path d="M13 1V6M10.500 3.500H15.500" strokeWidth={1} /></Ic>
        </Active>
        <Active w="w-[21px]">
          <Ic w={16} h={16}><Person c="#c4c8cd" /></Ic>
        </Active>
        <span className="w-[22px] text-center text-[#d5d9dd] font-semibold">1:1</span>
        <StCaret w="w-[10px]" />
      </Group>
      <Group className="ml-[2px] w-[37px]">
        <Active w="w-[22px]">
          <svg width={15} height={15} viewBox="0 0 15 15" className="shrink-0">
            <circle cx={7.500} cy={7.500} r={4} fill="none" stroke="#e0e3e6" strokeWidth={2.500} />
            <circle cx={7.500} cy={7.500} r={6} fill="none" stroke="#e0e3e6" strokeWidth={2.200} strokeDasharray="2.400 2.300" />
          </svg>
        </Active>
        <StCaret w="w-[15px]" />
      </Group>
      <Group className="ml-[2px] w-[22px] justify-center"><Plus /></Group>
      <Group className="ml-[1px] w-[24px] justify-center">
        <Ic w={16} h={16}><rect x={1} y={0.500} width={6} height={6} /><circle cx={13} cy={5} r={2.500} /><path d="M7 9L11 15H3Z" /></Ic>
      </Group>
      <Group className="ml-[2px] w-[24px] justify-center">
        <Ic w={15} h={13}><rect x={0.500} y={0.500} width={14} height={12} stroke="#aab0b6" /><path d="M3 10L6 7M3 7V10H6M12 3L9 6M9 3H12V6" stroke="#e0e3e6" /></Ic>
      </Group>
      <Group className="ml-[2px] w-[21px] pl-[1px]"><Ham /></Group>
    </div>
  </div>
);

export default function App() {
  return (
    <div className="w-[1280px] h-[720px] bg-black overflow-hidden flex flex-col font-['Roboto',sans-serif] text-[11.500px]">
      <div className="h-[17px] shrink-0" />
      <div className="border-l-2 border-[#1b77a8] shrink-0">
        <TitleBar />
        <TabRow />
        <Ribbon />
        <DocTabs />
        <Canvas />
      </div>
      <StatusBar />
    </div>
  );
}
